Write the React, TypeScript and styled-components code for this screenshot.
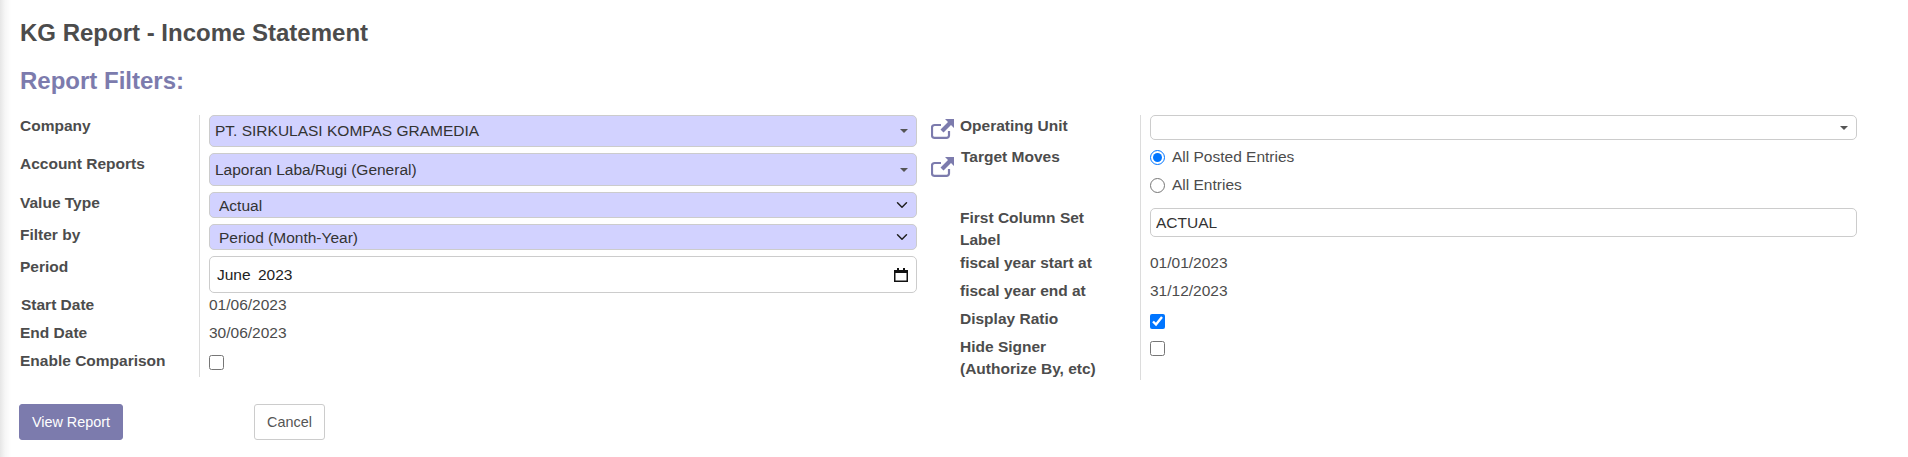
import React from "react";
import styled, { createGlobalStyle } from "styled-components";

const GlobalStyle = createGlobalStyle`
    html, body {
        margin: 0;
        padding: 0;
        background: #fff;
    }
    body {
        font-family: "Liberation Sans", Arial, sans-serif;
        font-size: 15.5px;
        color: #4c4c4c;
    }
`;

const Page = styled.div`
    height: 457px;
    overflow: hidden;
    box-sizing: border-box;
    padding: 17px 0 0 20px;
    background: linear-gradient(to right, #e6e6e6 0, #f6f6f6 5px, #fff 11px);
`;

const Title = styled.h1`
    margin: 0;
    font-size: 24px;
    line-height: 32px;
    font-weight: bold;
    color: #4c4c4c;
`;

const SubTitle = styled.h2`
    margin: 16px 0 0;
    font-size: 24px;
    line-height: 32px;
    font-weight: bold;
    color: #7c7bad;
`;

const Columns = styled.div`
    display: flex;
    margin-top: 18px;
`;

const LeftColumn = styled.div`
    width: 897px;
`;

const RightColumn = styled.div`
    width: 926px;
    margin-left: 14px;
`;

const Row = styled.div<{ $height: number }>`
    display: flex;
    height: ${(p) => p.$height}px;
`;

const Label = styled.label<{ $top?: number; $width?: number; $indent?: number }>`
    width: ${(p) => p.$width ?? 179}px;
    flex: none;
    box-sizing: border-box;
    padding-top: ${(p) => p.$top ?? 0}px;
    padding-left: ${(p) => p.$indent ?? 0}px;
    font-weight: bold;
    font-size: 15.5px;
    line-height: 22px;
    color: #4c4c4c;
`;

const Field = styled.div`
    flex: 1;
    border-left: 1px solid #dcdcdc;
    padding-left: 9px;
    min-width: 0;
`;

const IconSlot = styled.div<{ $top?: number }>`
    width: 29px;
    flex: none;
    color: #7c7bad;
    padding-top: ${(p) => p.$top ?? 0}px;
    svg {
        display: block;
    }
`;

const Many2One = styled.div<{ $height: number; $fill?: boolean }>`
    position: relative;
    box-sizing: border-box;
    height: ${(p) => p.$height}px;
    padding: 0 5px;
    display: flex;
    align-items: center;
    border: 1px solid #ccc;
    border-radius: 5px;
    background: ${(p) => (p.$fill ? "#d2d2ff" : "#fff")};
    color: #333;
    &::after {
        content: "";
        position: absolute;
        right: 8px;
        top: 50%;
        margin-top: -2px;
        border-left: 4px solid transparent;
        border-right: 4px solid transparent;
        border-top: 4px solid #555;
    }
`;

const SelectBox = styled.select`
    display: block;
    width: 100%;
    height: 26px;
    box-sizing: border-box;
    padding: 0 9px;
    border: 1px solid #ccc;
    border-radius: 5px;
    background: #d2d2ff;
    color: #333;
    font: 15.5px "Liberation Sans", Arial, sans-serif;
    appearance: none;
    background-image: url("data:image/svg+xml,%3csvg xmlns='http://www.w3.org/2000/svg' viewBox='0 0 16 16'%3e%3cpath fill='none' stroke='%23222' stroke-linecap='round' stroke-linejoin='round' stroke-width='2' d='M2 5l6 6 6-6'/%3e%3c/svg%3e");
    background-repeat: no-repeat;
    background-position: right 7px center;
    background-size: 14px 12px;
`;

const TextInput = styled.input<{ $height: number; $top?: number }>`
    display: block;
    width: 100%;
    height: ${(p) => p.$height}px;
    margin-top: ${(p) => p.$top ?? 0}px;
    box-sizing: border-box;
    padding: 0 5px;
    border: 1px solid #ccc;
    border-radius: 5px;
    background: #fff;
    color: #333;
    font: 15.5px "Liberation Sans", Arial, sans-serif;
    outline: none;
`;

const MonthBox = styled.div`
    display: flex;
    align-items: center;
    justify-content: space-between;
    height: 37px;
    box-sizing: border-box;
    padding: 0 8px 0 7px;
    border: 1px solid #ccc;
    border-radius: 5px;
    background: #fff;
    color: #222;
    word-spacing: 3px;
    svg {
        display: block;
    }
`;

const Value = styled.div<{ $top: number }>`
    padding-top: ${(p) => p.$top}px;
    line-height: 22px;
    color: #4c4c4c;
`;

const Check = styled.input<{ $top: number }>`
    display: block;
    width: 15px;
    height: 15px;
    margin: ${(p) => p.$top}px 0 0;
`;

const RadioRow = styled.label`
    display: flex;
    align-items: center;
    height: 28px;
    color: #4c4c4c;
    input {
        width: 15px;
        height: 15px;
        margin: 0 7px 0 0;
    }
`;

const Actions = styled.div`
    display: flex;
    margin: 24px 0 0 -1px;
`;

const Button = styled.button<{ $primary?: boolean }>`
    height: 36px;
    box-sizing: border-box;
    border-radius: 3px;
    font: 14.4px "Liberation Sans", Arial, sans-serif;
    padding: 0;
    border: 1px solid ${(p) => (p.$primary ? "#7c7bad" : "#ccc")};
    background: ${(p) => (p.$primary ? "#7c7bad" : "#fff")};
    color: ${(p) => (p.$primary ? "#fff" : "#555")};
    width: ${(p) => (p.$primary ? "104px" : "71px")};
    margin-right: ${(p) => (p.$primary ? "131px" : "0")};
`;

const ExternalIcon = () => (
    <svg width="23" height="20" viewBox="0 0 23 20" fill="none">
        <path
            d="M18 12v4.5a2.6 2.6 0 0 1-2.6 2.4H3.6A2.6 2.6 0 0 1 1 16.5V8.6A2.6 2.6 0 0 1 3.6 6H10"
            stroke="currentColor"
            strokeWidth="2.2"
        />
        <path
            d="M14 0h9v9l-3-3-7.5 7.5-3-3L17 3z"
            fill="currentColor"
        />
    </svg>
);

const CalendarIcon = () => (
    <svg width="14" height="14" viewBox="0 0 14 14" fill="none">
        <path d="M3 0h2v2h4V0h2v2h3v12H0V2h3z" fill="#111" />
        <rect x="1.5" y="5" width="11" height="7.5" fill="#fff" />
    </svg>
);

const App = () => (
    <Page>
        <GlobalStyle />
        <Title>KG Report - Income Statement</Title>
        <SubTitle>Report Filters:</SubTitle>
        <Columns>
            <LeftColumn>
                <Row $height={38}>
                    <Label>Company</Label>
                    <Field>
                        <Many2One $height={32} $fill>PT. SIRKULASI KOMPAS GRAMEDIA</Many2One>
                    </Field>
                </Row>
                <Row $height={39}>
                    <Label>Account Reports</Label>
                    <Field>
                        <Many2One $height={33} $fill>Laporan Laba/Rugi (General)</Many2One>
                    </Field>
                </Row>
                <Row $height={32}>
                    <Label>Value Type</Label>
                    <Field>
                        <SelectBox defaultValue="Actual">
                            <option>Actual</option>
                        </SelectBox>
                    </Field>
                </Row>
                <Row $height={32}>
                    <Label>Filter by</Label>
                    <Field>
                        <SelectBox defaultValue="Period (Month-Year)">
                            <option>Period (Month-Year)</option>
                        </SelectBox>
                    </Field>
                </Row>
                <Row $height={37}>
                    <Label>Period</Label>
                    <Field>
                        <MonthBox>June 2023<CalendarIcon /></MonthBox>
                    </Field>
                </Row>
                <Row $height={25}>
                    <Label $top={1} $indent={1}>Start Date</Label>
                    <Field>
                        <Value $top={1}>01/06/2023</Value>
                    </Field>
                </Row>
                <Row $height={28}>
                    <Label $top={4}>End Date</Label>
                    <Field>
                        <Value $top={4}>30/06/2023</Value>
                    </Field>
                </Row>
                <Row $height={31}>
                    <Label $top={4}>Enable Comparison</Label>
                    <Field>
                        <Check type="checkbox" $top={9} />
                    </Field>
                </Row>
            </LeftColumn>
            <RightColumn>
                <Row $height={28}>
                    <IconSlot $top={4}><ExternalIcon /></IconSlot>
                    <Label $width={180}>Operating Unit</Label>
                    <Field>
                        <Many2One $height={25} />
                    </Field>
                </Row>
                <Row $height={56}>
                    <IconSlot $top={14}><ExternalIcon /></IconSlot>
                    <Label $width={180} $top={3} $indent={1}>Target Moves</Label>
                    <Field>
                        <RadioRow><input type="radio" name="moves" defaultChecked />All Posted Entries</RadioRow>
                        <RadioRow><input type="radio" name="moves" />All Entries</RadioRow>
                    </Field>
                </Row>
                <Row $height={53}>
                    <IconSlot />
                    <Label $width={180} $top={8}>First Column Set<br />Label</Label>
                    <Field>
                        <TextInput $height={29} $top={9} defaultValue="ACTUAL" />
                    </Field>
                </Row>
                <Row $height={28}>
                    <IconSlot />
                    <Label $width={180}>fiscal year start at</Label>
                    <Field><Value $top={0}>01/01/2023</Value></Field>
                </Row>
                <Row $height={28}>
                    <IconSlot />
                    <Label $width={180}>fiscal year end at</Label>
                    <Field><Value $top={0}>31/12/2023</Value></Field>
                </Row>
                <Row $height={28}>
                    <IconSlot />
                    <Label $width={180}>Display Ratio</Label>
                    <Field><Check type="checkbox" defaultChecked $top={6} /></Field>
                </Row>
                <Row $height={44}>
                    <IconSlot />
                    <Label $width={180}>Hide Signer<br />(Authorize By, etc)</Label>
                    <Field><Check type="checkbox" $top={5} /></Field>
                </Row>
            </RightColumn>
        </Columns>
        <Actions>
            <Button $primary>View Report</Button>
            <Button>Cancel</Button>
        </Actions>
    </Page>
);

export default App;
